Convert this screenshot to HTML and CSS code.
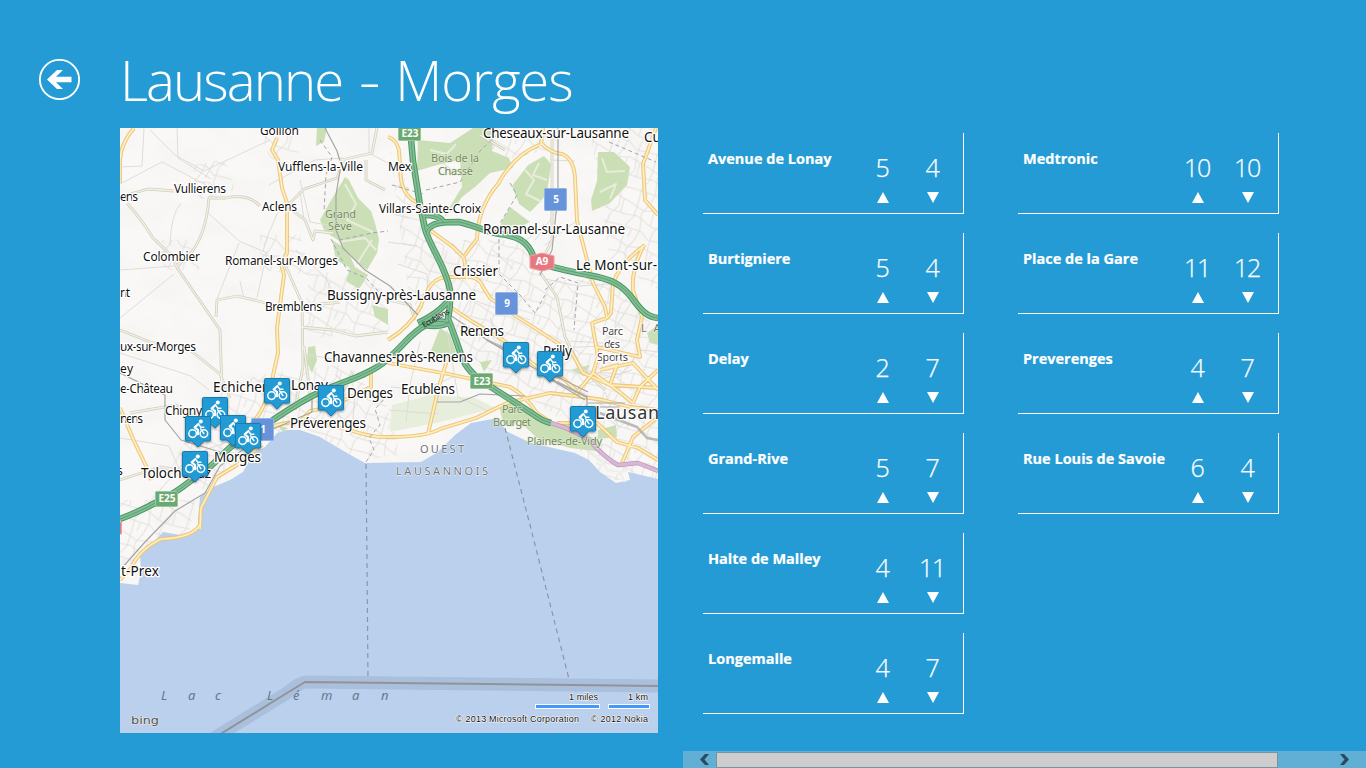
FILE: index.html
```html
<!DOCTYPE html>
<html lang="en">
<head>
<meta charset="utf-8">
<title>Lausanne - Morges</title>
<link rel="stylesheet" href="styles.css">
</head>
<body>
<div class="app">
<header class="header">
  <svg class="back" viewBox="0 0 42 42" width="42" height="42"><circle cx="21.500" cy="20.500" r="19.600"/><path d="M9 20.500 19 11H25L18 17.700H33.500V23.300H18L25 30H19Z"/></svg>
  <h1 class="title"><span class="tight">Lausanne</span> <span class="dash">-</span> <span class="loose">Morges</span></h1>
</header>
<main class="content">
<svg class="map" viewBox="120 128 538 605" width="538" height="605">
  <defs>
    <g id="pin">
      <path class="pin-shape" d="M1.5 .5H24.5Q25.5 .5 25.5 1.5V24Q25.5 25 24.5 25H18.8L13 31 7.2 25H1.5Q.5 25 .5 24V1.5Q.5 .5 1.5 .5Z"/>
      <circle class="wheel" cx="7.6" cy="17.600" r="3.800"/><circle class="wheel" cx="18.900" cy="17.600" r="3.800"/>
      <circle class="head" cx="15.800" cy="5.500" r="2"/>
      <path class="rider" d="M13.4 8 9.7 11.4 13 14.2V18.2"/>
      <path class="frame" d="M13.8 8.6 15.9 11.2H18.8M15.7 12.8 18.9 17.6"/>
    </g>
    <path id="a1" d="M120 519 C142 511 155 503 170 495 S190 480 203 472 C216 463 222 454 232 446 L273 420 C292 407 305 399 322 391 C342 382 366 376 383 363 C400 350 411 332 426 325 Q438 319 449 323"/>
    <path id="e23" d="M410 128 L413 161 420 205 425 229 C430 247 446 267 450 290 Q451 304 448 319 C454 333 458 347 463 360 C469 372 478 379 491 387 C508 398 522 407 533 414 Q542 421 551 423"/>
    <path id="a9" d="M426 232 C431 222 443 222 459 222 C474 225 486 232 500 234 C516 236 528 240 534 258 C540 265 560 269 588 275 C612 279 622 285 632 298 C642 312 648 317 658 318 M424 215 Q440 215 443 222 M418 323 Q445 310 451 295 M425 325 Q441 328 449 322"/>
    <path id="orange" d="M134 128 Q121 143 120 160V183 M277 138 272 150 278 160 282 188 287 203V253L281 264 284 275 277 328 278 353 272 380Q265 412 250 425 M388 137Q396 139 399 150L401 180Q404 197 418 203 M539 145Q514 155 498 184Q478 207 477 239L465 255 M541 143Q550 153 562 154Q574 159 575 178L577 221 593 283 605 307 607 318 592 323 595 340 598 357 593 373 617 390 633 403 M541 145 543 128 M430 230 453 247 464 258 467 279 M388 340Q410 327 421 306Q430 275 450 277H465Q479 276 483 287L490 298 517 317 530 325 550 338 572 353 583 373 610 385 658 388 M450 307 473 322 503 340 537 367 565 380 583 397 603 400 630 407 658 410 M658 215 645 200 643 164 656 128 M645 245Q621 262 613 283L611 313 607 318 M644 245Q631 270 633 290L642 317 637 340 640 357 597 347 M388 437Q427 437 440 429L476 418 507 403 550 393 583 397 M388 363 448 374 510 387Q525 395 537 413L551 422 M428 434 438 390 447 360 M600 370 633 363 658 390 M557 423H597L617 442 638 448 658 460 M622 463 633 437 658 417 M593 373 575 395 M610 385 617 365 600 370 M633 403 640 387 658 370 M200 529 201 508 217 477 237 465 250 454 262 445 M267 428Q288 421 307 421L347 429Q371 438 388 437 M200 525Q192 538 161 539Q140 549 131 568L120 580 M120 408 134 441 147 468 151 480 M298 424 310 411 330 407 371 387V371"/>
    <path id="beige" d="M120 197 148 189 174 191 M127 203Q142 220 153 238L173 257 176 266 220 330 222 392 M176 266Q205 249 209 198L226 198Q248 193 260 206 M287 206 304 189 337 178 344 159 M287 206 305 220 313 240 315 231 333 233 M216 317 217 300 237 296 258 301 283 307 313 305 340 302 M283 260 302 303 303 366 299 388 295 410 M120 330 150 342 190 350 220 374 230 398 M301 327 332 330 355 336 388 332 M377 128 372 153 341 160 M366 160V180L385 190 M388 300 410 305 415 320 M540 272 557 297 565 337 580 367 605 390 M540 265 552 240 552 130 M480 135 505 150 M120 480 160 467 189 472 M310 394 304 346 M340 398 353 371 M130 413 176 405 207 420"/>
    <path id="lane" d="M144 128 142 166 120 167 M150 130 175 155 204 171 270 140 M177 128 178 158 211 179 M120 184 162 162 206 185 M205 178 215 161 M181 203Q171 214 170 245 M208 213 239 241 267 253 M239 243 217 299 M267 252 257 298 M174 274 120 318 M120 270 174 266 M281 205 268 235 263 251 M269 185 315 160 343 158 M300 180 310 222 345 228 M240 281 244 299 M296 250 326 278 335 298 M300 191 304 220 M120 353 191 376 209 390 M120 438 169 446 182 475 M302 354 346 361 388 354 M328 391 345 428 M145 507 191 455 233 440 M335 374 355 393 353 419 M369 128V153L388 163 M388 213 409 218 M388 242 417 246 M398 264 427 274 428 300 M430 154 459 175 M550 160 575 161 M557 211 535 240 M575 222 545 245 M544 224 520 246 M452 243 467 258 M492 249 513 269 M546 279 578 286 609 284 M464 297 530 320 M555 348 604 346 632 301 M570 341 617 344 M565 370 620 374 M572 388 632 370 M617 378 642 350 658 352 M605 392 618 426 M447 330 458 397 490 412 M420 342 410 385 406 422 M391 387 423 390 455 376 M389 410 438 414 M490 318 503 350 M475 289 462 314"/>
    <pattern id="streets" width="47" height="39" patternUnits="userSpaceOnUse" patternTransform="rotate(24)"><path class="street" d="M0 6 16 9 29 4 47 6M0 19 12 16 30 21 47 19M0 31 22 29 31 34 47 31M7 0 9 18 5 28 7 39M19 0 15 12 20 28 19 39M34 0 38 14 33 25 34 39M26 5 28 20M40 6 42 19M12 31V39"/></pattern>
    <filter id="noise"><feTurbulence type="fractalNoise" baseFrequency=".026 .04" numOctaves="3" seed="8"/><feColorMatrix values="0 0 0 0 .76 0 0 0 0 .76 0 0 0 0 .73 0 0 0 1.8 -.72"/></filter>
    <filter id="shadow"><feDropShadow dx="0" dy="1" stdDeviation="1.1" flood-opacity=".45"/></filter>
  </defs>
  <rect class="land" x="120" y="128" width="538" height="605"/>
  <rect x="120" y="128" width="538" height="460" filter="url(#noise)" opacity=".2"/>
  <path fill="url(#streets)" d="M455 240 520 240 545 280 610 280 635 300 658 335V480H600L555 415 485 370 450 330ZM480 128H560L552 150 500 160ZM390 150 420 210 480 300 410 305ZM210 390 260 375 340 365 385 400 400 455 360 460 300 425 205 490 170 470ZM590 128 658 128V290L610 260ZM260 130 290 130 300 155 270 160ZM190 165 225 160 235 190 200 200ZM155 240 190 240 200 270 165 270ZM260 235 300 235 310 275 260 270ZM310 270 380 280 390 330 300 340ZM120 500 195 500 190 530 120 570Z"/>
  <path class="forest" d="M418 140 450 143 473 128 495 128 492 151 509 158 513 168 490 173 475 187 462 197 453 210 444 217 457 195 462 187 460 160 437 165 417 171Z M345 177 349 180 358 198 371 211 375 223 379 239 377 253 367 270 355 260 338 240 325 232 320 220 330 202Z M317 128 327 128 324 142 316 146Z M332 240 347 249 355 267 368 275 359 289 346 281 350 268 336 260Z M372 305 388 309V325L375 317Z M544 156 551 164 547 193 541 201 530 212 519 204 512 186 528 165Z M598 152 614 152 630 167 627 185 610 203 592 211 591 200 597 181Z M530 222 510 207 502 221 497 234 510 232Z M308 347 315 346 317 360 312 373 307 363Z M277 425 288 428 283 432Z M499 406 513 398 540 420 575 426 600 443 596 451 570 448 537 438 520 422 504 426Z M440 328 450 334 456 352 448 359 430 353Z M598 430 616 425 617 437 598 439Z M570 370 590 365 584 376Z M480 362 492 360 484 372Z M647 333 658 325V345L650 343Z"/>
  <path class="meadow" d="M392 405 430 395 475 398 495 408 440 422 390 432Z"/>
  <path class="forest-trail" d="M345 184 356 204 347 220 373 232M339 242 365 238 376 250M357 264 372 240M525 170 534 180 526 194 542 202M539 163 533 175 547 180M602 158 607 172 625 171M600 192 616 184 610 199M430 150 447 154 456 144"/>
  <use href="#lane" class="lane"/>
  <use href="#beige" class="beige-case"/><use href="#beige" class="beige-fill"/>
  <path class="water" d="M658 479 628 472 630 480 616 483 600 472 589 460 575 453 531 443 506 431 498 418 471 423 455 435 438 452 421 462 365 463 347 453 320 437 300 430 287 430 277 433 265 447 253 453 243 472 230 480 213 487 200 497 198 520V529L180 535 163 532 153 543 140 555 141 572 138 585 120 583V733H658Z"/>
  <path class="harbour" d="M589 451 602 459 607 470 620 472 625 482M606 466 596 463M620 473 634 467"/>
  <use href="#orange" class="orange-case"/><use href="#orange" class="orange-fill"/><use href="#orange" class="orange-core"/>
  <path class="rail" d="M325 128 337 151 341 164 336 195 336 230 343 248 365 270 390 286 418 315M450 315 487 340 557 382 587 397M558 128V195L552 250 540 275M120 373 165 395 165 420 181 440 220 452M120 570 145 542 175 511 205 493 220 466 271 430 312 412V398M437 402 460 402 480 394 525 396"/>
  <path class="yard" d="M487 340 515 354M557 382 587 397M597 412 637 427 647 438 658 440"/>
  <path class="rail" d="M545 376 585 400M552 374 588 392M588 403H625M590 407H620M587 396 587 412"/>
  <path class="limits" d="M320 140 332 157 326 175 324 211M331 239 347 270 366 278 388 302M339 240 372 233 388 231M426 190 460 182 480 151 504 128M510 183 517 195 499 225V274L520 295 535 313 545 295M609 142 656 162M545 290 560 277 578 283 574 330M392 185 423 194M366 462 374 450 369 438 380 425 375 409 388 395"/>
  <use href="#a1" class="motor-case"/><use href="#e23" class="motor-case"/><use href="#a9" class="motor-case"/>
  <use href="#a1" class="motor-fill"/><use href="#e23" class="motor-fill"/><use href="#a9" class="motor-fill"/>
  <use href="#a1" class="motor-core"/><use href="#e23" class="motor-core"/><use href="#a9" class="motor-core"/>
  <path class="pink-case" d="M551 423Q575 430 590 441Q605 458 618 465L638 463 658 471"/><path class="pink-fill" d="M551 423Q575 430 590 441Q605 458 618 465L638 463 658 471"/>
  <path class="ferry" d="M366 464 367 560 368 681M505 428 530 525 570 683"/>
  <path class="border-band" d="M214 738 287 693Q300 682 307 682L658 686"/><path class="border-line" d="M214 738 287 693 305 682 658 686"/>
  <g class="labels small">
    <text x="260" y="135" textLength="39">Gollion</text><text x="278" y="171" textLength="85">Vufflens-la-Ville</text><text x="388" y="171" textLength="23">Mex</text><text x="174" y="193" textLength="52">Vullierens</text><text x="120" y="201" textLength="18">ens</text><text x="262" y="211" textLength="35">Aclens</text><text x="379" y="213" textLength="102">Villars-Sainte-Croix</text><text x="143" y="261" textLength="57">Colombier</text><text x="225" y="265" textLength="113">Romanel-sur-Morges</text><text x="120" y="297" textLength="10">nt</text><text x="265" y="311" textLength="57">Bremblens</text><text x="120" y="351" textLength="76">ux-sur-Morges</text><text x="120" y="373" textLength="13">ey</text><text x="120" y="393" textLength="53">e-Château</text><text x="120" y="423" textLength="23">nens</text><text x="165" y="415" textLength="37">Chigny</text><text x="117" y="475">s</text>
  </g>
  <g class="labels medium">
    <text x="483" y="138" textLength="146">Cheseaux-sur-Lausanne</text><text x="644" y="142">Cu</text><text x="483" y="234" textLength="142">Romanel-sur-Lausanne</text><text x="453" y="276" textLength="45">Crissier</text><text x="576" y="270" textLength="81">Le Mont-sur-</text><text x="327" y="300" textLength="149">Bussigny-près-Lausanne</text><text x="460" y="336" textLength="44">Renens</text><text x="324" y="362" textLength="149">Chavannes-près-Renens</text><text x="543" y="356" textLength="29">Prilly</text><text x="401" y="394" textLength="54">Ecublens</text><text x="213" y="392" textLength="64">Echichens</text><text x="291" y="390" textLength="37">Lonay</text><text x="347" y="398" textLength="46">Denges</text><text x="290" y="428" textLength="76">Préverenges</text><text x="214" y="462" textLength="47">Morges</text><text x="141" y="478" textLength="70">Tolochenaz</text><text x="121" y="576" textLength="38">t-Prex</text><text class="city" x="595" y="419" textLength="76">Lausann</text>
  </g>
  <g class="labels parks"><text x="325" y="218" textLength="31">Grand</text><text x="328" y="230" textLength="24">Sève</text><text x="431" y="162" textLength="48">Bois de la</text><text x="438" y="175" textLength="35">Chasse</text><text x="502" y="413" textLength="20">Parc</text><text x="493" y="426" textLength="38">Bourget</text><text x="527" y="445" textLength="75">Plaines-de-Vidy</text></g>
  <g class="labels sports"><text x="602" y="335" textLength="21">Parc</text><text x="604" y="348" textLength="16">des</text><text x="597" y="361" textLength="31">Sports</text></g>
  <g class="labels district"><text x="420" y="453" textLength="46">OUEST</text><text x="396" y="475" textLength="94">LAUSANNOIS</text><text x="641" y="332">L A</text></g>
  <text class="junction" x="424" y="328" textLength="30" transform="rotate(-30 424 328)">Ecublens</text>
  <g class="lake"><text x="161" y="700">L</text><text x="188" y="700">a</text><text x="215" y="700">c</text><text x="267" y="700">L</text><text x="293" y="700">é</text><text x="321" y="700">m</text><text x="352" y="700">a</text><text x="381" y="700">n</text></g>
  <g class="shields">
    <rect class="green" x="398.500" y="125.500" width="22" height="15" rx="1"/><text x="410" y="137">E23</text>
    <rect class="green" x="470.500" y="373.500" width="22" height="15" rx="1"/><text x="482" y="385">E23</text>
    <rect class="green" x="155.500" y="491.500" width="22" height="15" rx="1"/><text x="167" y="502">E25</text>
    <path class="red" d="M530 256 542 253 554 256V268L542 271 530 268Z"/><text x="542" y="265">A9</text>
    <rect class="blue" x="544.500" y="188.500" width="22" height="22" rx="1"/><text x="556" y="203">5</text>
    <rect class="blue" x="495.500" y="292.500" width="22" height="22" rx="1"/><text x="507" y="307">9</text>
    <rect class="blue" x="251.500" y="418.500" width="22" height="22" rx="1"/><text x="263" y="433">1</text>
    <path class="red" d="M118 522H121.500V534H118Z"/>
  </g>
  <g class="pins"><use href="#pin" x="264" y="378"/><use href="#pin" x="318" y="385"/><use href="#pin" x="202" y="397"/><use href="#pin" x="185" y="416"/><use href="#pin" x="220" y="415"/><use href="#pin" x="235" y="423"/><use href="#pin" x="182" y="451"/><use href="#pin" x="503" y="342"/><use href="#pin" x="537" y="351"/><use href="#pin" x="570" y="406"/></g>
  <text class="bing" x="131" y="724" textLength="28" lengthAdjust="spacingAndGlyphs">bing</text>
  <g class="legal"><text x="569" y="700" textLength="29">1 miles</text><text x="628" y="700" textLength="20">1 km</text><text x="456" y="722" textLength="123">© 2013 Microsoft Corporation</text><text x="591" y="722" textLength="57">© 2012 Nokia</text></g>
  <g class="scale"><rect x="535.500" y="704.500" width="64" height="4"/><rect x="608.500" y="704.500" width="41" height="4"/></g>
</svg>
<section class="stations">
  <article class="station"><h2>Avenue de Lonay</h2><div class="count"><b>5</b><i class="up"></i></div><div class="count"><b>4</b><i class="down"></i></div></article>
  <article class="station"><h2>Burtigniere</h2><div class="count"><b>5</b><i class="up"></i></div><div class="count"><b>4</b><i class="down"></i></div></article>
  <article class="station"><h2>Delay</h2><div class="count"><b>2</b><i class="up"></i></div><div class="count"><b>7</b><i class="down"></i></div></article>
  <article class="station"><h2>Grand-Rive</h2><div class="count"><b>5</b><i class="up"></i></div><div class="count"><b>7</b><i class="down"></i></div></article>
  <article class="station"><h2>Halte de Malley</h2><div class="count"><b>4</b><i class="up"></i></div><div class="count"><b>11</b><i class="down"></i></div></article>
  <article class="station"><h2>Longemalle</h2><div class="count"><b>4</b><i class="up"></i></div><div class="count"><b>7</b><i class="down"></i></div></article>
  <article class="station"><h2>Medtronic</h2><div class="count"><b>10</b><i class="up"></i></div><div class="count"><b>10</b><i class="down"></i></div></article>
  <article class="station"><h2>Place de la Gare</h2><div class="count"><b>11</b><i class="up"></i></div><div class="count"><b>12</b><i class="down"></i></div></article>
  <article class="station"><h2>Preverenges</h2><div class="count"><b>4</b><i class="up"></i></div><div class="count"><b>7</b><i class="down"></i></div></article>
  <article class="station"><h2>Rue Louis de Savoie</h2><div class="count"><b>6</b><i class="up"></i></div><div class="count"><b>4</b><i class="down"></i></div></article>
</section>
</main>
<footer class="scrollbar">
  <svg class="arrow" width="33" height="17" viewBox="0 0 33 17"><path d="M22 3H26L21.500 8.500 26 14H22L17 8.500Z"/></svg>
  <div class="thumb"></div>
  <svg class="arrow" width="33" height="17" viewBox="0 0 33 17"><path d="M11 3H7L11.500 8.500 7 14H11L16 8.500Z"/></svg>
</footer>
</div>
</body>
</html>
```
FILE: styles.css
```css
* { box-sizing: border-box; }
body { margin: 0; background: #249bd5; color: #fff; font-family: "Open Sans", "Noto Sans", sans-serif; overflow: hidden; }
.app { width: 1366px; height: 768px; display: flex; flex-direction: column; }
.header { height: 128px; display: flex; padding: 58px 0 0 38px; gap: 40px; }
.back { fill: #fff; margin-top: 1px; }
.back circle { fill: none; stroke: #fff; stroke-width: 1.900; }
.title { margin: -15px 0 0; font-size: 54.500px; line-height: 74px; font-weight: 300; white-space: nowrap; }
.tight { letter-spacing: -1.900px; }
.dash { display: inline-block; transform: scaleX(1.25); margin: 0 3px 0 4px; }
.loose { letter-spacing: -1.100px; }
.content { display: flex; height: 623px; padding-left: 120px; gap: 45px; align-items: flex-start; }
.map { display: block; flex: none; }
.stations { display: grid; grid-template-rows: repeat(6, 82px); grid-auto-flow: column; grid-auto-columns: 261px; gap: 18px 54px; padding-top: 4px; }
.station { display: flex; margin-top: 1px; height: 81px; border-right: 1px solid #fff; border-bottom: 1px solid #fff; padding-right: 5px; }
.station h2 { flex: 1; margin: 0; padding: 15px 0 0 5px; font-size: 14.500px; line-height: 22px; font-weight: 700; white-space: nowrap; -webkit-text-stroke: .2px #fff; }
.count { width: 50px; padding-top: 19px; display: flex; flex-direction: column; align-items: center; }
.count b { margin-right: 2px; font-size: 25px; line-height: 31px; font-weight: 300; letter-spacing: -1.200px; -webkit-text-stroke: .25px #fff; }
.count i { width: 12px; height: 11px; margin-top: 9px; background: #fff; }
.up { clip-path: polygon(50% 0, 100% 100%, 0 100%); }
.down { clip-path: polygon(0 0, 100% 0, 50% 100%); }
.scrollbar { width: 683px; height: 17px; margin-left: 683px; display: flex; background: #62afd6; }
.thumb { width: 562px; height: 16px; margin-top: 1px; background: #cdcdcd; border: 1px solid #7595a5; }
.arrow { fill: #294c5e; }
.arrow:last-child { margin-left: 55px; }

.land { fill: #f9f8f6; }
.street { fill: none; stroke: #dedbd7; stroke-width: .8; }
.forest { fill: #cbdfb6; }
.meadow { fill: #e7eedb; }
.map path { stroke-linejoin: round; }
.forest-trail { fill: none; stroke: #e7eddb; stroke-width: 2; }
.water { fill: #bad0ec; }
.lane, .beige-case, .beige-fill, .orange-case, .orange-fill, .orange-core, .rail, .yard, .limits, .motor-case, .motor-fill, .motor-core, .pink-case, .pink-fill, .ferry, .border-band, .border-line { fill: none; }
.lane { stroke: #deddd9; stroke-width: 1; }
.beige-case { stroke: #cfcebf; stroke-width: 2.800; }
.beige-fill { stroke: #f3f1e5; stroke-width: 1.300; }
.orange-case { stroke: #e8bf78; stroke-width: 3.800; }
.orange-fill { stroke: #f7d88f; stroke-width: 2.600; }
.orange-core { stroke: #fff2c4; stroke-width: 1.200; }
.rail { stroke: #a5a5a5; stroke-width: 1.200; }
.yard { stroke: #aaa; stroke-width: 2.500; opacity: .8; }
.limits { stroke: #a5a6ab; stroke-width: 1; stroke-dasharray: 4 3; }
.motor-case { stroke: #459765; stroke-width: 6.500; }
.motor-fill { stroke: #84bd93; stroke-width: 4.500; }
.motor-core { stroke: #55a273; stroke-width: 1; }
.pink-case { stroke: #bd96bd; stroke-width: 4.500; }
.pink-fill { stroke: #d9b7d7; stroke-width: 3; }
.harbour { fill: none; stroke: #efefed; stroke-width: 2; }
.ferry { stroke: #8798a8; stroke-width: 1.200; stroke-dasharray: 5 4; }
.border-band { stroke: #a9bfdb; stroke-width: 13; }
.border-line { stroke: #929399; stroke-width: 2; }
.map text { font-family: "Noto Sans", "Open Sans", sans-serif; }
.labels { fill: #111; stroke: #fff; stroke-width: 2.500px; paint-order: stroke; stroke-linejoin: round; }
.small { font-size: 12px; }
.medium { font-size: 13.500px; }
.map .city { font-size: 18px; fill: #333; }
.parks { font-size: 11px; fill: #75895f; stroke: #e5eed9; stroke-width: 1px; }
.sports { font-size: 11px; fill: #444; }
.district { font-size: 11px; fill: #707276; stroke-width: .8px; letter-spacing: 2px; }
.junction { font-size: 8px; fill: #222; }
.lake { font-size: 13px; font-style: italic; fill: #61788f; }
.shields { fill: #fff; stroke: none; font-size: 10px; font-weight: 700; text-anchor: middle; }
.green { fill: #6aaa71; stroke: #9bc59d; }
.blue { fill: #6693da; stroke: #96b4e3; }
.red { fill: #e57880; stroke: #efa0a4; }
.pins { filter: url(#shadow); }
.pin-shape { fill: #249bd5; stroke: #147bb2; stroke-width: 1; }
.wheel { fill: none; stroke: #fff; stroke-width: 1.500; }
.head { fill: #fff; }
.rider, .frame { fill: none; stroke: #fff; stroke-linecap: round; }
.rider { stroke-width: 2.200; }
.frame { stroke-width: 1.500; }
.map .bing { font-family: "DejaVu Sans", sans-serif; font-size: 10px; fill: #555; stroke: #e8e8e8; stroke-width: 1px; paint-order: stroke; }
.map .legal text { font-family: "Liberation Sans", Arial, sans-serif; font-size: 9px; fill: #111; stroke: #fff; stroke-width: 1px; paint-order: stroke; }
.scale { fill: #4298ff; stroke: #fff; }
```
